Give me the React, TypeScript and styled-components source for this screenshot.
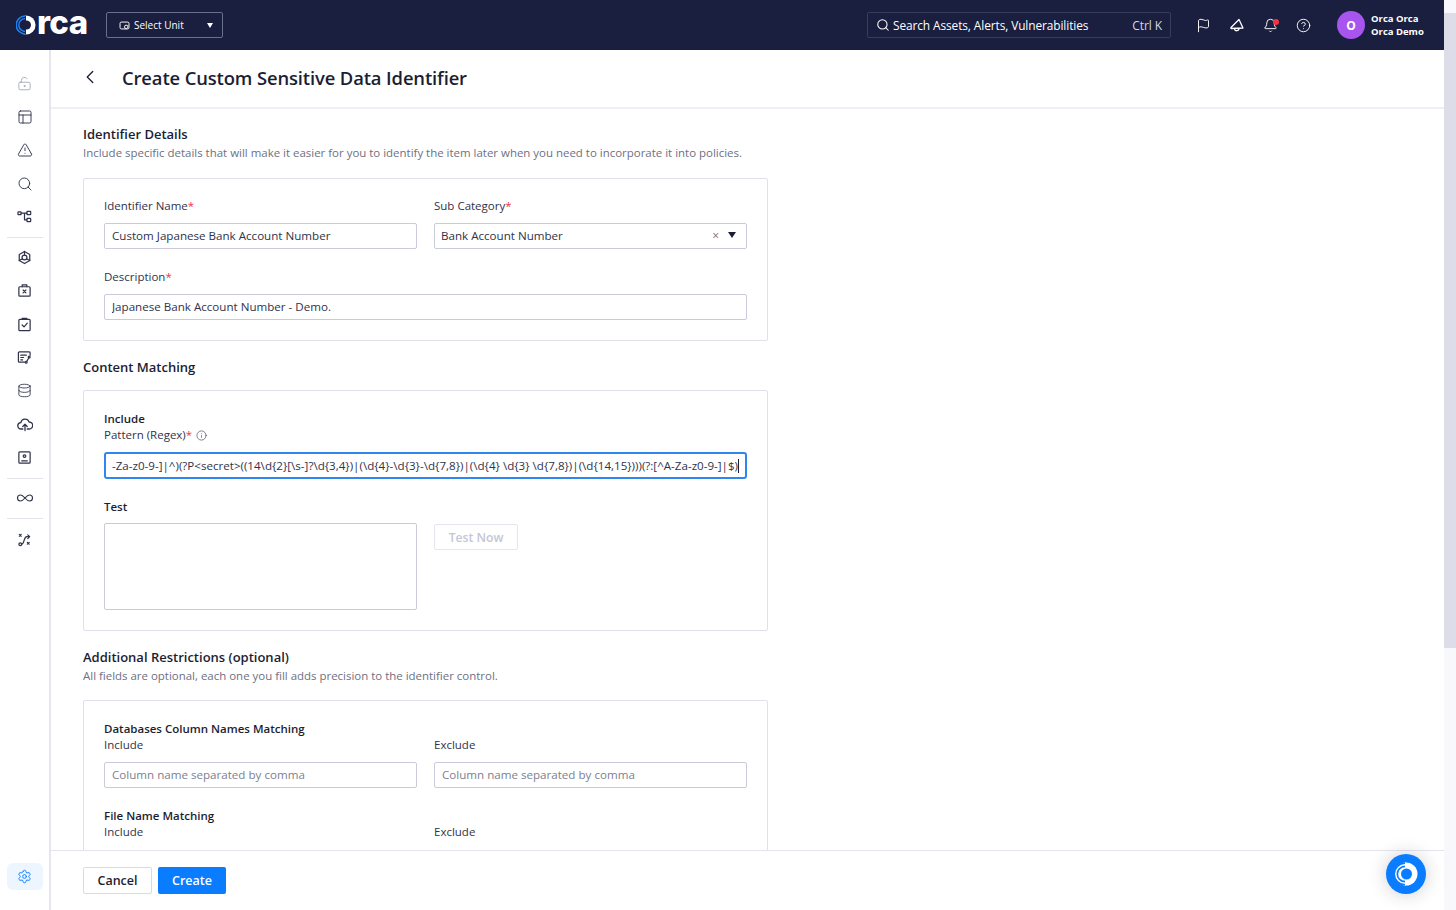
import React from 'react';
import styled, { createGlobalStyle } from 'styled-components';
import {
	Bell,
	ChevronLeft,
	CircleHelp,
	Database,
	Flag,
	Infinity as InfinityIcon,
	Info,
	LockKeyholeOpen,
	PanelsTopLeft,
	Search,
	Settings,
	TriangleAlert,
} from 'lucide-react';

const GlobalStyle = createGlobalStyle`
	html, body {
		margin: 0;
		height: 100%;
		overflow: hidden;
		background: #fff;
	}
	* {
		box-sizing: border-box;
	}
	body {
		font-family: 'Open Sans', 'Noto Sans', sans-serif;
		color: #1b1e33;
	}
`;

const Page = styled.div`
	display: flex;
	height: 910px;
	width: 1456px;
`;

const Frame = styled.div`
	flex: 1;
	min-width: 0;
	display: flex;
	flex-direction: column;
`;

const ScrollTrack = styled.div`
	width: 12px;
	background: #f8f8fc;
	padding-top: 13px;
`;

const ScrollThumb = styled.div`
	height: 635px;
	background: #dcdde9;
`;

const TopBar = styled.header`
	height: 50px;
	flex: none;
	background: #1a1e3f;
	display: flex;
	align-items: center;
	padding: 0 20px 0 16px;
	color: #fff;
`;

const Logo = styled.div`
	display: flex;
	align-items: center;
	width: 90px;
	font-family: 'Inter', sans-serif;
	font-weight: 800;
	font-size: 33px;
	letter-spacing: -0.6px;
	line-height: 1;
	margin-top: -6px;
`;

const LogoIcon = styled.span`
	display: flex;
	margin: 6px 1px 0 0;
`;

const UnitSelect = styled.div`
	width: 117px;
	height: 26px;
	display: flex;
	align-items: center;
	gap: 4px;
	padding: 0 9px 0 12px;
	border: 1px solid #68708f;
	border-radius: 2px;
	font-size: 10px;
`;

const Caret = styled.span<{ $color?: string }>`
	margin-left: auto;
	width: 0;
	height: 0;
	border-left: 3.5px solid transparent;
	border-right: 3.5px solid transparent;
	border-top: 5px solid ${({ $color }) => $color || '#fff'};
`;

const SearchBox = styled.div`
	margin-left: auto;
	width: 304px;
	height: 26px;
	display: flex;
	align-items: center;
	gap: 3px;
	padding: 0 8px 0 8px;
	border: 1px solid #383c5c;
	border-radius: 2px;
	font-size: 11.9px;
	letter-spacing: -0.1px;
`;

const Shortcut = styled.span`
	margin-left: auto;
	font-size: 12px;
	color: #d5d7e4;
`;

const TopIcons = styled.div`
	display: flex;
	align-items: center;
	gap: 18px;
	margin-left: 25px;
`;

const BellWrap = styled.span`
	position: relative;
	display: flex;
`;

const BellDot = styled.span`
	position: absolute;
	top: 1px;
	right: -1px;
	width: 6px;
	height: 6px;
	border-radius: 50%;
	background: #f5333f;
`;

const Avatar = styled.div`
	width: 28px;
	height: 28px;
	border-radius: 50%;
	background: #a855f0;
	margin-left: 26px;
	display: flex;
	align-items: center;
	justify-content: center;
	font-size: 12px;
	font-weight: 700;
`;

const UserName = styled.div`
	margin-left: 6px;
	font-size: 9.5px;
	font-weight: 700;
	line-height: 13px;
	width: 53px;
	white-space: nowrap;
`;

const Body = styled.div`
	flex: 1;
	min-height: 0;
	display: flex;
`;

const SideNav = styled.nav`
	width: 51px;
	flex: none;
	border-right: 2px solid #e6e6f0;
	display: flex;
	flex-direction: column;
	align-items: center;
	padding: 17px 0 20px;
`;

const NavItem = styled.span<{ $muted?: boolean }>`
	height: 33.3px;
	flex: none;
	display: flex;
	align-items: center;
	justify-content: center;
	color: ${({ $muted }) => ($muted ? '#a4a6b5' : '#30334b')};
`;

const NavRule = styled.hr`
	width: 36px;
	height: 1px;
	border: 0;
	margin: 3.5px 0 3px;
	background: #e3e3ec;
	flex: none;
`;

const NavSettings = styled.span`
	margin-top: auto;
	width: 36px;
	height: 27px;
	border-radius: 6px;
	background: #edf5ff;
	color: #0a7cff;
	display: flex;
	align-items: center;
	justify-content: center;
`;

const Main = styled.main`
	flex: 1;
	min-width: 0;
	display: flex;
	flex-direction: column;
`;

const PageHead = styled.div`
	height: 59px;
	flex: none;
	border-bottom: 2px solid #eeeef4;
	display: flex;
	align-items: center;
	padding: 0 0 3px 28px;
	gap: 21px;
`;

const PageTitle = styled.h1`
	margin: 0;
	font-size: 18.4px;
	font-weight: 600;
	letter-spacing: -0.12px;
`;

const Content = styled.div`
	flex: 1;
	min-height: 0;
	overflow: hidden;
	padding: 16px 32px 0;
	width: 749px;
`;

const SectionTitle = styled.h2<{ $gap?: number }>`
	margin: 0;
	font-size: 13px;
	line-height: 18px;
	font-weight: 600;
	margin-bottom: ${({ $gap }) => $gap ?? 0}px;
`;

const SectionNote = styled.p<{ $gap?: number }>`
	margin: 1px 0 ${({ $gap }) => $gap ?? 16}px;
	font-size: 11.46px;
	line-height: 18px;
	color: #6d7084;
`;

const Card = styled.section<{ $top?: number; $minHeight?: number }>`
	border: 1px solid #dfe0ea;
	border-radius: 2px;
	padding: ${({ $top }) => $top ?? 20}px 20px 20px;
	margin-bottom: 17px;
	min-height: ${({ $minHeight }) => $minHeight ?? 0}px;
`;

const Row = styled.div<{ $gap?: number }>`
	display: grid;
	grid-template-columns: 313px 313px;
	column-gap: 17px;
	margin-bottom: ${({ $gap }) => $gap ?? 0}px;
`;

const Label = styled.div`
	font-size: 11.5px;
	line-height: 16px;
	color: #30334b;
	margin-bottom: 9px;
	display: flex;
	align-items: center;
`;

const Required = styled.span`
	color: #f0334a;
	align-self: flex-start;
`;

const GroupTitle = styled.div<{ $top?: number; $bottom?: number }>`
	font-size: 11.5px;
	line-height: 16px;
	font-weight: 600;
	margin: ${({ $top }) => $top ?? 0}px 0 ${({ $bottom }) => $bottom ?? 0}px;
`;

const InfoMark = styled(Info)`
	margin-left: 4px;
`;

const Input = styled.input`
	display: block;
	width: 100%;
	height: 26px;
	padding: 0 7px 2px;
	border: 1px solid #c9cbdb;
	border-radius: 2px;
	font: inherit;
	font-size: 11.6px;
	color: #30334b;
	outline: none;
	&::placeholder {
		color: #7c7f92;
		opacity: 1;
	}
`;

const SelectBox = styled.div`
	height: 26px;
	display: flex;
	align-items: center;
	padding: 0 10px 2px 6px;
	border: 1px solid #c9cbdb;
	border-radius: 2px;
	font-size: 11.6px;
	color: #30334b;
`;

const ClearMark = styled.span`
	margin-left: auto;
	margin-right: 9px;
	font-size: 12px;
	color: #6d7084;
`;

const SelectCaret = styled(Caret)`
	margin-left: 0;
	border-left-width: 4px;
	border-right-width: 4px;
	border-top-width: 6px;
`;

const RegexField = styled.div`
	height: 27px;
	display: flex;
	align-items: center;
	padding: 0 6px;
	border: 2px solid #2f86ee;
	border-radius: 3px;
	font-size: 11.6px;
	white-space: nowrap;
	overflow: hidden;
	color: #30334b;
`;

const TextCaret = styled.span`
	width: 1px;
	height: 14px;
	background: #1b1e33;
	flex: none;
`;

const TextArea = styled.textarea`
	display: block;
	width: 100%;
	height: 87px;
	border: 1px solid #c9cbdb;
	border-radius: 2px;
	resize: none;
	outline: none;
`;

const GhostButton = styled.button`
	width: 84px;
	height: 26px;
	margin-top: 1px;
	border: 1px solid #e6e6ee;
	border-radius: 2px;
	background: #fff;
	color: #c3c6d8;
	font: inherit;
	font-size: 12.2px;
	font-weight: 600;
`;

const Footer = styled.footer`
	height: 60px;
	flex: none;
	border-top: 1px solid #e4e4ee;
	display: flex;
	align-items: flex-start;
	gap: 6px;
	padding: 16px 0 0 32px;
	position: relative;
`;

const FooterButton = styled.button<{ $primary?: boolean }>`
	height: 27px;
	width: ${({ $primary }) => ($primary ? 68 : 69)}px;
	border-radius: 2px;
	border: ${({ $primary }) => ($primary ? '0' : '1px solid #d9dae6')};
	background: ${({ $primary }) => ($primary ? '#0a7cff' : '#fff')};
	color: ${({ $primary }) => ($primary ? '#fff' : '#1b1e33')};
	font: inherit;
	font-size: 12.5px;
	font-weight: 600;
`;

const ChatBubble = styled.div`
	position: absolute;
	right: 18px;
	top: 3px;
	width: 40px;
	height: 40px;
	border-radius: 50%;
	background: #0a7cff;
	box-shadow: 0 0 18px rgba(30, 30, 60, 0.22);
	display: flex;
	align-items: center;
	justify-content: center;
`;

// white ring with a striped left side, the same mark as in the top bar logo
const OrcaMark = ({ size, stripe, left, hole }: { size: number; stripe: string; left: string; hole: string }) => (
	<svg width={size} height={size} viewBox="0 0 24 24" fill="none">
		<circle cx="12" cy="12" r="11.5" fill="#fff" />
		<path d="M12 .5a11.5 11.5 0 0 0 0 23" fill={left} />
		<path d="M11 1.2a10.800 10.800 0 0 0 0 21.600" stroke={stripe} strokeWidth="1.7" />
		<path d="M11 4.3a7.700 7.700 0 0 0 0 15.400" stroke={stripe} strokeWidth="1.7" />
		<circle cx="12.5" cy="12" r="5.5" fill={hole} />
	</svg>
);

const Glyph = ({ children, size = 15 }: { children: React.ReactNode; size?: number }) => (
	<svg
		width={size}
		height={size}
		viewBox="0 0 16 16"
		fill="none"
		stroke="currentColor"
		strokeWidth="1.3"
		strokeLinecap="round"
		strokeLinejoin="round"
	>
		{children}
	</svg>
);

const sideIcons = {
	graph: (
		<Glyph>
			<rect x="1" y="3" width="3.4" height="3" rx=".6" />
			<rect x="10.6" y="2.5" width="4" height="3.4" rx=".6" />
			<rect x="10.6" y="10" width="4" height="3.4" rx=".6" />
			<path d="M4.4 4.4h6.2M8 4.4v7.2h2.6" />
		</Glyph>
	),
	hex: (
		<Glyph>
			<path d="M8 1.5l5.6 3.2v6.6L8 14.5l-5.6-3.2V4.7z" />
			<circle cx="8" cy="8" r="2.6" />
			<path d="M8 1.5v3.9M2.4 11.3l3.4-2M13.6 11.3l-3.4-2" />
		</Glyph>
	),
	box: (
		<Glyph>
			<rect x="2" y="4" width="12" height="10" rx="1" />
			<path d="M5.5 4V2h5v2M6.5 7.5l3 3M9.500 7.5l-3 3" />
		</Glyph>
	),
	check: (
		<Glyph>
			<rect x="2" y="2.5" width="12" height="12" rx="1" />
			<path d="M5.5 2.5V1.5h5v1M5.5 8.5l2 2 3.5-4" />
		</Glyph>
	),
	policy: (
		<Glyph>
			<path d="M8 13H2.5a1 1 0 0 1-1-1V3a1 1 0 0 1 1-1H13a1 1 0 0 1 1 1v2.5" />
			<path d="M4 5.5h6M4 8h3M4 10.5h2" />
			<circle cx="13" cy="7.5" r="1" />
			<circle cx="9.8" cy="13" r="1" />
			<path d="M12.6 8.5l-2.3 3.6" />
		</Glyph>
	),
	cloud: (
		<Glyph size={16}>
			<path d="M5.8 13H4.2a3.2 3.2 0 0 1-.4-6.4 4.3 4.3 0 0 1 8.3-.6 3.5 3.5 0 0 1 .2 7h-2.100" />
			<path d="M8 14.5V8.5M5.8 10.5L8 8.300l2.200 2.200" />
		</Glyph>
	),
	id: (
		<Glyph>
			<rect x="2" y="2" width="12" height="12" rx="1" />
			<circle cx="8" cy="6.5" r="1.4" />
			<path d="M5 11.5h6" />
		</Glyph>
	),
	route: (
		<Glyph>
			<circle cx="3.5" cy="13" r="1.5" />
			<path d="M5 13c3 0 2-8 5.5-8H13M11.5 3l2 2-2 2M2.5 2.5l2 2M4.5 2.5l-2 2M11 11l2 2M13 11l-2 2" />
		</Glyph>
	),
	megaphone: (
		<Glyph size={16}>
			<path d="M2 10.5L10 2.500l4 8.500-12 .500z" />
			<path d="M5.500 11.500c0 3 4.500 3 4.500-.2" />
		</Glyph>
	),
};

export default function App() {
	return (
		<Page>
			<GlobalStyle />
			<Frame>
				<TopBar>
					<Logo>
						<LogoIcon><OrcaMark size={20} stripe="#1e84f5" left="#1a1e3f" hole="#1a1e3f" /></LogoIcon>
						rca
					</Logo>
					<UnitSelect>
						<svg width="11" height="11" viewBox="0 0 16 16" fill="none" stroke="#fff" strokeWidth="1.4">
							<rect x="1.5" y="3" width="13" height="10" rx="2" />
							<circle cx="10.5" cy="10" r="2.5" fill="#1a1e3f" />
						</svg>
						Select Unit
						<Caret />
					</UnitSelect>
					<SearchBox>
						<Search size={14} strokeWidth={1.8} />
						Search Assets, Alerts, Vulnerabilities
						<Shortcut>Ctrl K</Shortcut>
					</SearchBox>
					<TopIcons>
						<Flag size={15} strokeWidth={1.5} />
						{sideIcons.megaphone}
						<BellWrap>
							<Bell size={15} strokeWidth={1.5} />
							<BellDot />
						</BellWrap>
						<CircleHelp size={15} strokeWidth={1.5} />
					</TopIcons>
					<Avatar>O</Avatar>
					<UserName>
						Orca Orca
						<br />
						Orca Demo
					</UserName>
				</TopBar>
				<Body>
					<SideNav>
						<NavItem $muted><LockKeyholeOpen size={15} strokeWidth={1.4} /></NavItem>
						<NavItem><PanelsTopLeft size={16} strokeWidth={1.4} /></NavItem>
						<NavItem><TriangleAlert size={16} strokeWidth={1.4} /></NavItem>
						<NavItem><Search size={16} strokeWidth={1.4} /></NavItem>
						<NavItem>{sideIcons.graph}</NavItem>
						<NavRule />
						<NavItem>{sideIcons.hex}</NavItem>
						<NavItem>{sideIcons.box}</NavItem>
						<NavItem>{sideIcons.check}</NavItem>
						<NavItem>{sideIcons.policy}</NavItem>
						<NavItem><Database size={15} strokeWidth={1.4} /></NavItem>
						<NavItem>{sideIcons.cloud}</NavItem>
						<NavItem>{sideIcons.id}</NavItem>
						<NavRule />
						<NavItem><InfinityIcon size={18} strokeWidth={1.5} /></NavItem>
						<NavRule />
						<NavItem>{sideIcons.route}</NavItem>
						<NavSettings><Settings size={15} strokeWidth={1.5} /></NavSettings>
					</SideNav>
					<Main>
						<PageHead>
							<ChevronLeft size={22} strokeWidth={1.4} />
							<PageTitle>Create Custom Sensitive Data Identifier</PageTitle>
						</PageHead>
						<Content>
							<SectionTitle>Identifier Details</SectionTitle>
							<SectionNote>
								Include specific details that will make it easier for you to identify the item later when you need to incorporate it into policies.
							</SectionNote>
							<Card $top={19}>
								<Row $gap={20}>
									<div>
										<Label>Identifier Name<Required>*</Required></Label>
										<Input readOnly value="Custom Japanese Bank Account Number" />
									</div>
									<div>
										<Label>Sub Category<Required>*</Required></Label>
										<SelectBox>
											Bank Account Number
											<ClearMark>×</ClearMark>
											<SelectCaret $color="#1b1e33" />
										</SelectBox>
									</div>
								</Row>
								<Label>Description<Required>*</Required></Label>
								<Input readOnly value="Japanese Bank Account Number - Demo." />
							</Card>
							<SectionTitle $gap={14}>Content Matching</SectionTitle>
							<Card>
								<GroupTitle>Include</GroupTitle>
								<Label>
									Pattern (Regex)<Required>*</Required>
									<InfoMark size={11} strokeWidth={1.3} />
								</Label>
								<RegexField>
									{'-Za-z0-9-]|^)(?P<secret>((14\\d{2}[\\s-]?\\d{3,4})|(\\d{4}-\\d{3}-\\d{7,8})|(\\d{4} \\d{3} \\d{7,8})|(\\d{14,15})))(?:[^A-Za-z0-9-]|$)'}
									<TextCaret />
								</RegexField>
								<GroupTitle $top={20} $bottom={8}>Test</GroupTitle>
								<Row>
									<TextArea readOnly />
									<div><GhostButton>Test Now</GhostButton></div>
								</Row>
							</Card>
							<SectionTitle>Additional Restrictions (optional)</SectionTitle>
							<SectionNote $gap={15}>All fields are optional, each one you fill adds precision to the identifier control.</SectionNote>
							<Card $minHeight={300}>
								<GroupTitle>Databases Column Names Matching</GroupTitle>
								<Row $gap={20}>
									<div>
										<Label>Include</Label>
										<Input readOnly placeholder="Column name separated by comma" />
									</div>
									<div>
										<Label>Exclude</Label>
										<Input readOnly placeholder="Column name separated by comma" />
									</div>
								</Row>
								<GroupTitle>File Name Matching</GroupTitle>
								<Row>
									<Label>Include</Label>
									<Label>Exclude</Label>
								</Row>
							</Card>
						</Content>
						<Footer>
							<FooterButton>Cancel</FooterButton>
							<FooterButton $primary>Create</FooterButton>
							<ChatBubble><OrcaMark size={24} stripe="#0a7cff" left="#fff" hole="#0a7cff" /></ChatBubble>
						</Footer>
					</Main>
				</Body>
			</Frame>
			<ScrollTrack><ScrollThumb /></ScrollTrack>
		</Page>
	);
}
